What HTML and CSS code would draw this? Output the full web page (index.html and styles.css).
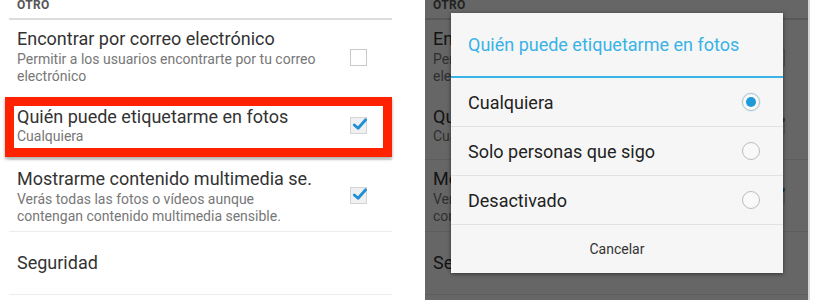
FILE: index.html
```html
<!DOCTYPE html>
<html lang="es">
<head>
<meta charset="utf-8">
<link rel="stylesheet" href="styles.css">
</head>
<body>
<div class="page">
  <section class="screen screen-left">
    <div class="list">
      <div class="section-head">OTRO</div>
      <div class="row row-1">
        <div class="texts">
          <div class="title">Encontrar por correo electrónico</div>
          <div class="sub">Permitir a los usuarios encontrarte por tu correo electrónico</div>
        </div>
        <span class="check"></span>
      </div>
      <div class="row row-2 highlighted">
        <div class="texts">
          <div class="title">Quién puede etiquetarme en fotos</div>
          <div class="sub">Cualquiera</div>
        </div>
        <span class="check checked"><svg viewBox="0 0 18 18"><path d="M3.5 9.5 L7.5 13 L15.5 4" /></svg></span>
      </div>
      <div class="row row-3">
        <div class="texts">
          <div class="title">Mostrarme contenido multimedia se.</div>
          <div class="sub sub-narrow">Verás todas las fotos o vídeos aunque contengan contenido multimedia sensible.</div>
        </div>
        <span class="check checked"><svg viewBox="0 0 18 18"><path d="M3.5 9.5 L7.5 13 L15.5 4" /></svg></span>
      </div>
      <div class="row row-4">
        <div class="texts">
          <div class="title">Seguridad</div>
        </div>
      </div>
    </div>
  </section>

  <section class="screen screen-right">
    <div class="list list-back">
      <div class="section-head">OTRO</div>
      <div class="row row-1">
        <div class="texts">
          <div class="title">Encontrar por correo electrónico</div>
          <div class="sub">Permitir a los usuarios encontrarte por tu correo electrónico</div>
        </div>
        <span class="check"></span>
      </div>
      <div class="row row-2">
        <div class="texts">
          <div class="title">Quién puede etiquetarme en fotos</div>
          <div class="sub">Cualquiera</div>
        </div>
        <span class="check checked"><svg viewBox="0 0 18 18"><path d="M3.5 9.5 L7.5 13 L15.5 4" /></svg></span>
      </div>
      <div class="row row-3">
        <div class="texts">
          <div class="title">Mostrarme contenido multimedia se.</div>
          <div class="sub sub-narrow">Verás todas las fotos o vídeos aunque contengan contenido multimedia sensible.</div>
        </div>
        <span class="check checked"><svg viewBox="0 0 18 18"><path d="M3.5 9.5 L7.5 13 L15.5 4" /></svg></span>
      </div>
      <div class="row row-4">
        <div class="texts">
          <div class="title">Seguridad</div>
        </div>
      </div>
    </div>
    <div class="scrim"></div>
    <div class="dialog">
      <div class="dialog-title">Quién puede etiquetarme en fotos</div>
      <div class="option">
        <span class="option-label">Cualquiera</span>
        <span class="radio selected"></span>
      </div>
      <div class="option">
        <span class="option-label">Solo personas que sigo</span>
        <span class="radio"></span>
      </div>
      <div class="option">
        <span class="option-label">Desactivado</span>
        <span class="radio"></span>
      </div>
      <div class="dialog-action">Cancelar</div>
    </div>
  </section>
</div>
</body>
</html>
```

FILE: styles.css
```css
*, *::before, *::after { box-sizing: border-box; }
html, body {
  margin: 0;
  padding: 0;
  background: #ffffff;
}
body {
  font-family: Roboto, "Noto Sans", "Liberation Sans", sans-serif;
  width: 820px;
  height: 300px;
  overflow: hidden;
}
.page {
  display: flex;
  gap: 25px;
  height: 300px;
}
.screen {
  height: 300px;
  overflow: hidden;
}
.screen-left {
  width: 400px;
}
.screen-right {
  width: 385px;
  position: relative;
  border-right: 2px solid #d6d6d6;
}
.list {
  background: #ffffff;
  height: 300px;
  padding: 0 8px 0 9px;
}
.list-back {
  padding: 0;
}
.section-head {
  height: 20px;
  padding: 0 0 0 8px;
  font-size: 12px;
  font-weight: 700;
  letter-spacing: 0.3px;
  color: #555;
  line-height: 11px;
  border-bottom: 2px solid #dcdcdc;
}
.row {
  display: flex;
  align-items: center;
  padding: 0 25px 0 8px;
  border-bottom: 1px solid #ececec;
}
.row-1 { border-bottom-color: transparent; }
.list-back .row { padding-left: 8px; padding-right: 23px; }
.row-1 { height: 73px; align-items: flex-start; padding-top: 9px; }
.row-2 { height: 67px; align-items: flex-start; padding-top: 14px; }
.row-3 { height: 72px; align-items: flex-start; padding-top: 9px; }
.row-4 { height: 63px; }
.texts { flex: 1; min-width: 0; }
.title {
  font-size: 18px;
  line-height: 20px;
  color: #333;
}
.sub {
  font-size: 14px;
  line-height: 17px;
  color: #777;
  margin-top: 2px;
  width: 320px;
}
.row-2 .sub { margin-top: 1px; }
.sub-narrow { width: 290px; }
.check {
  width: 17px;
  height: 17px;
  flex: none;
  border: 1.5px solid #c9c9c9;
  background: #fff;
  margin-top: 20px;
  position: relative;
}
.row-2 .check { margin-top: 10px; }
.row-3 .check { margin-top: 18px; }
.check svg {
  position: absolute;
  left: 0;
  top: -2px;
  width: 17px;
  height: 17px;
  fill: none;
  stroke: #1f8fd6;
  stroke-width: 3;
  stroke-linecap: round;
  stroke-linejoin: round;
}
.checked { background: #eef0f1; border-color: #d4d4d4; }
.highlighted { position: relative; }
.highlighted::after {
  content: "";
  position: absolute;
  left: -4px;
  top: 4px;
  width: 387px;
  height: 60px;
  border: 9px solid #ff2200;
  box-shadow: 0 2px 3px rgba(0,0,0,0.35);
  pointer-events: none;
}
.scrim {
  position: absolute;
  inset: 0;
  background: rgba(0, 0, 0, 0.6);
}
.dialog {
  position: absolute;
  left: 26px;
  top: 13px;
  width: 332px;
  height: 260px;
  background: #f6f6f6;
  box-shadow: 0 1px 4px rgba(0,0,0,0.5);
  display: flex;
  flex-direction: column;
}
.dialog-title {
  height: 65px;
  padding: 22px 0 0 17px;
  font-size: 18px;
  line-height: 20px;
  color: #39b3e6;
  border-bottom: 2px solid #39b3e6;
}
.option {
  height: 49px;
  display: flex;
  align-items: center;
  justify-content: space-between;
  padding: 0 23px 0 17px;
  border-bottom: 1px solid #e2e2e2;
}
.option-label {
  font-size: 18px;
  color: #222;
}
.radio {
  width: 18px;
  height: 18px;
  border-radius: 50%;
  border: 1.5px solid #bdbdbd;
  background: #f9f9f9;
  display: flex;
  align-items: center;
  justify-content: center;
}
.radio.selected {
  border-color: #b0c4cf;
  box-shadow: 0 0 0 1px #e3eef3;
}
.radio.selected::after {
  content: "";
  width: 10px;
  height: 10px;
  border-radius: 50%;
  background: #1f9ad8;
}
.dialog-action {
  flex: 1;
  display: flex;
  align-items: center;
  justify-content: center;
  font-size: 14px;
  color: #333;
}
```
